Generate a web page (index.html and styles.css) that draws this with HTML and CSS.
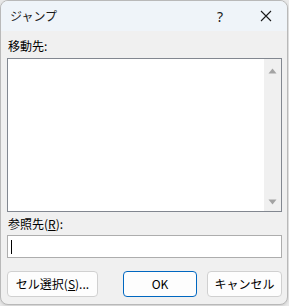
FILE: index.html
```html
<!DOCTYPE html>
<html lang="ja">
<head>
<meta charset="utf-8">
<link rel="stylesheet" href="styles.css">
</head>
<body>
<div class="window">
  <div class="titlebar">
    <span class="title">ジャンプ</span>
    <span class="help">?</span>
    <span class="close">
      <svg width="12" height="12" viewBox="0 0 12 12"><path d="M1 1L11 11M11 1L1 11" stroke="#1a1a1a" stroke-width="1.1" fill="none"/></svg>
    </span>
  </div>
  <div class="content">
    <div class="label">移動先:</div>
    <div class="listbox">
      <div class="list"></div>
      <div class="scrollbar">
        <svg class="arrow" width="9" height="6" viewBox="0 0 9 6"><path d="M4.5 0.5L8.5 5.5H0.5Z" fill="#a3a3a3"/></svg>
        <svg class="arrow" width="9" height="6" viewBox="0 0 9 6"><path d="M0.5 0.5H8.5L4.5 5.5Z" fill="#a3a3a3"/></svg>
      </div>
    </div>
    <div class="label label2">参照先(<u>R</u>):</div>
    <div class="input"><span class="caret"></span></div>
    <div class="buttons">
      <div class="btn btn-cell">セル選択(<u>S</u>)...</div>
      <div class="btn btn-ok">OK</div>
      <div class="btn btn-cancel">キャンセル</div>
    </div>
  </div>
</div>
</body>
</html>
```
FILE: styles.css
```css
html, body {
  margin: 0;
  padding: 0;
}
body {
  width: 289px;
  height: 306px;
  background: #e9e9e9;
  font-family: "Noto Sans CJK JP", "Noto Sans", sans-serif;
  font-size: 12px;
  color: #000;
  overflow: hidden;
}
.window {
  box-sizing: border-box;
  width: 288px;
  height: 305px;
  border: 1px solid #b9b9b9;
  border-radius: 8px;
  background: #f0f0f0;
  overflow: hidden;
  display: flex;
  flex-direction: column;
  box-shadow: 0 1px 3px rgba(0,0,0,0.12);
}
.titlebar {
  height: 30px;
  flex: none;
  background: #eff4f9;
  display: flex;
  align-items: center;
  padding-left: 9px;
}
.title {
  flex: 1;
  font-size: 12px;
  line-height: 16px;
  color: #1a1a1a;
}
.help {
  width: 20px;
  text-align: center;
  margin-right: 30px;
  font-family: "Noto Sans", sans-serif;
  font-size: 14px;
  color: #1a1a1a;
}
.close {
  width: 12px;
  height: 12px;
  margin-right: 15px;
  display: flex;
}
.content {
  flex: 1;
  display: flex;
  flex-direction: column;
  padding: 7px 5px 0 6px;
}
.label {
  height: 16px;
  line-height: 16px;
  margin-bottom: 4px;
  padding-left: 1px;
}
.label2 {
  margin-top: 4px;
  margin-bottom: 3px;
}
.listbox {
  box-sizing: border-box;
  height: 154px;
  border: 1px solid #828790;
  background: #fff;
  display: flex;
}
.list {
  flex: 1;
}
.scrollbar {
  width: 17px;
  background: #f0f0f0;
  display: flex;
  flex-direction: column;
  justify-content: space-between;
  align-items: center;
  padding: 9px 0 6px;
}
.arrow {
  display: block;
}
.input {
  box-sizing: border-box;
  height: 23px;
  border: 1px solid #adadad;
  background: #fff;
  display: flex;
  align-items: center;
  padding-left: 3px;
}
.caret {
  width: 1px;
  height: 14px;
  background: #000;
}
.buttons {
  display: flex;
  margin-top: 13px;
}
.btn {
  box-sizing: border-box;
  height: 26px;
  border: 1px solid #d0d0d0;
  border-radius: 4px;
  background: #fdfdfd;
  display: flex;
  align-items: center;
  justify-content: center;
  line-height: 16px;
}
.btn-cell {
  width: 91px;
}
.btn-ok {
  width: 74px;
  margin-left: auto;
  border-color: #0067c0;
}
.btn-cancel {
  width: 75px;
  margin-left: 10px;
}
```
